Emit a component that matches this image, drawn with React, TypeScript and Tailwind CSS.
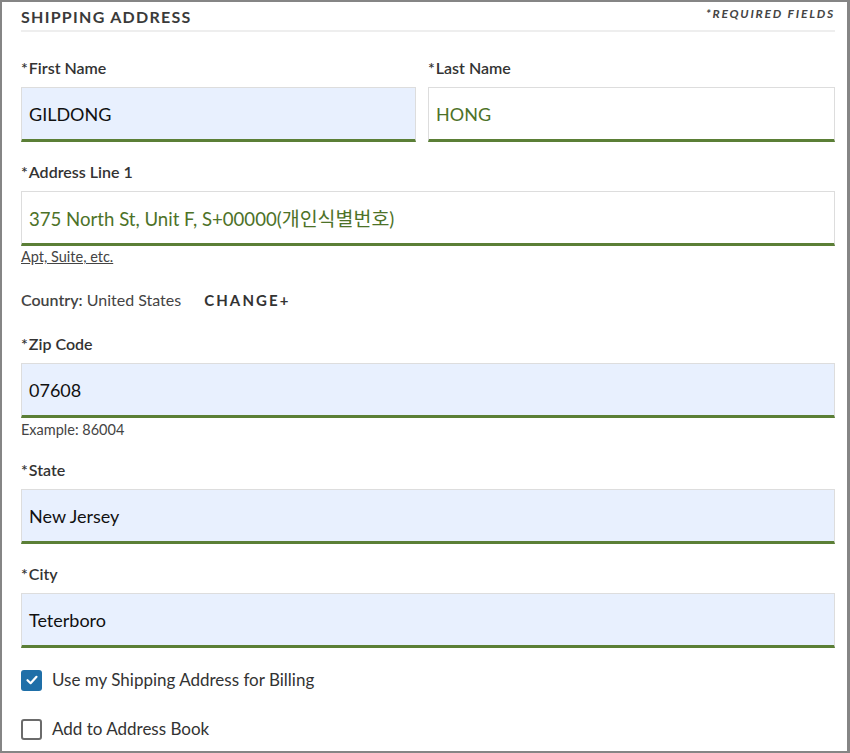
import React from "react";

const font = { fontFamily: "Lato, 'Noto Sans CJK KR', sans-serif" };

function Label({ children }: { children: React.ReactNode }) {
  return (
    <div className="text-[16px] font-semibold text-[#333] leading-5 mb-[9px]">
      <span className="mr-[1px]">*</span>
      {children}
    </div>
  );
}

function Field({ children, filled = true, green = false }: { children: React.ReactNode; filled?: boolean; green?: boolean }) {
  return (
    <div
      className={
        "h-[55px] flex items-center px-[7px] pt-[2px] border border-[#ddd] border-b-[3px] border-b-[#5b7f36] text-[18px] " +
        (filled ? "bg-[#e8f0fe] " : "bg-white ") +
        (green ? "text-[#4d7228]" : "text-[#111]")
      }
    >
      {children}
    </div>
  );
}

export default function App() {
  return (
    <div
      className="w-[850px] h-[753px] bg-white border-2 border-r-[3px] border-[#858585] overflow-hidden pl-[19px] pr-[12px]"
      style={font}
    >
      <div className="flex items-end justify-between h-[30px] border-b-2 border-[#eeeeee] pb-[3px]">
        <span className="text-[16px] font-bold tracking-[0.08em] text-[#3a3a3a] leading-5">SHIPPING ADDRESS</span>
        <span className="text-[12px] font-bold italic tracking-[0.15em] text-[#444] leading-4 mb-[5px]">*REQUIRED FIELDS</span>
      </div>

      <div className="grid grid-cols-[395px_1fr] gap-x-[12px] mt-[26px]">
        <div>
          <Label>First Name</Label>
          <Field>GILDONG</Field>
        </div>
        <div>
          <Label>Last Name</Label>
          <Field filled={false} green>HONG</Field>
        </div>
      </div>

      <div className="mt-[20px]">
        <Label>Address Line 1</Label>
        <Field filled={false} green>
          <span className="text-[18.6px]">
            375 North St, Unit F, S+00000(<span className="text-[19.5px]">개인식별번호</span>)
          </span>
        </Field>
        <div className="text-[14.5px] text-[#444] underline leading-4 mt-[3px]">Apt, Suite, etc.</div>
      </div>

      <div className="flex items-center mt-[25px] h-[20px]">
        <span className="text-[16px] text-[#444]">
          <span className="font-semibold">Country:</span> United States
        </span>
        <span className="ml-[23px] text-[15px] font-bold tracking-[0.14em] text-[#333]">CHANGE+</span>
      </div>

      <div className="mt-[24px]">
        <Label>Zip Code</Label>
        <Field>07608</Field>
        <div className="text-[14.5px] text-[#444] leading-4 mt-[4px]">Example: 86004</div>
      </div>

      <div className="mt-[22px]">
        <Label>State</Label>
        <Field>New Jersey</Field>
      </div>

      <div className="mt-[20px]">
        <Label>City</Label>
        <Field>Teterboro</Field>
      </div>

      <label className="flex items-center mt-[21px] h-[22px]">
        <span className="w-[21px] h-[21px] rounded-[3px] bg-[#1f6fa8] flex items-center justify-center">
          <svg width="14" height="14" viewBox="0 0 14 14" fill="none">
            <path d="M2.5 7.2 L5.6 10.2 L11.5 3.8" stroke="white" strokeWidth="2.2" strokeLinecap="round" strokeLinejoin="round" />
          </svg>
        </span>
        <span className="ml-[10px] text-[17px] text-[#333]">Use my Shipping Address for Billing</span>
      </label>

      <label className="flex items-center mt-[27px] h-[22px]">
        <span className="w-[21px] h-[21px] rounded-[3px] border-2 border-[#6b6b6b] bg-white" />
        <span className="ml-[10px] text-[17px] text-[#333]">Add to Address Book</span>
      </label>
    </div>
  );
}
